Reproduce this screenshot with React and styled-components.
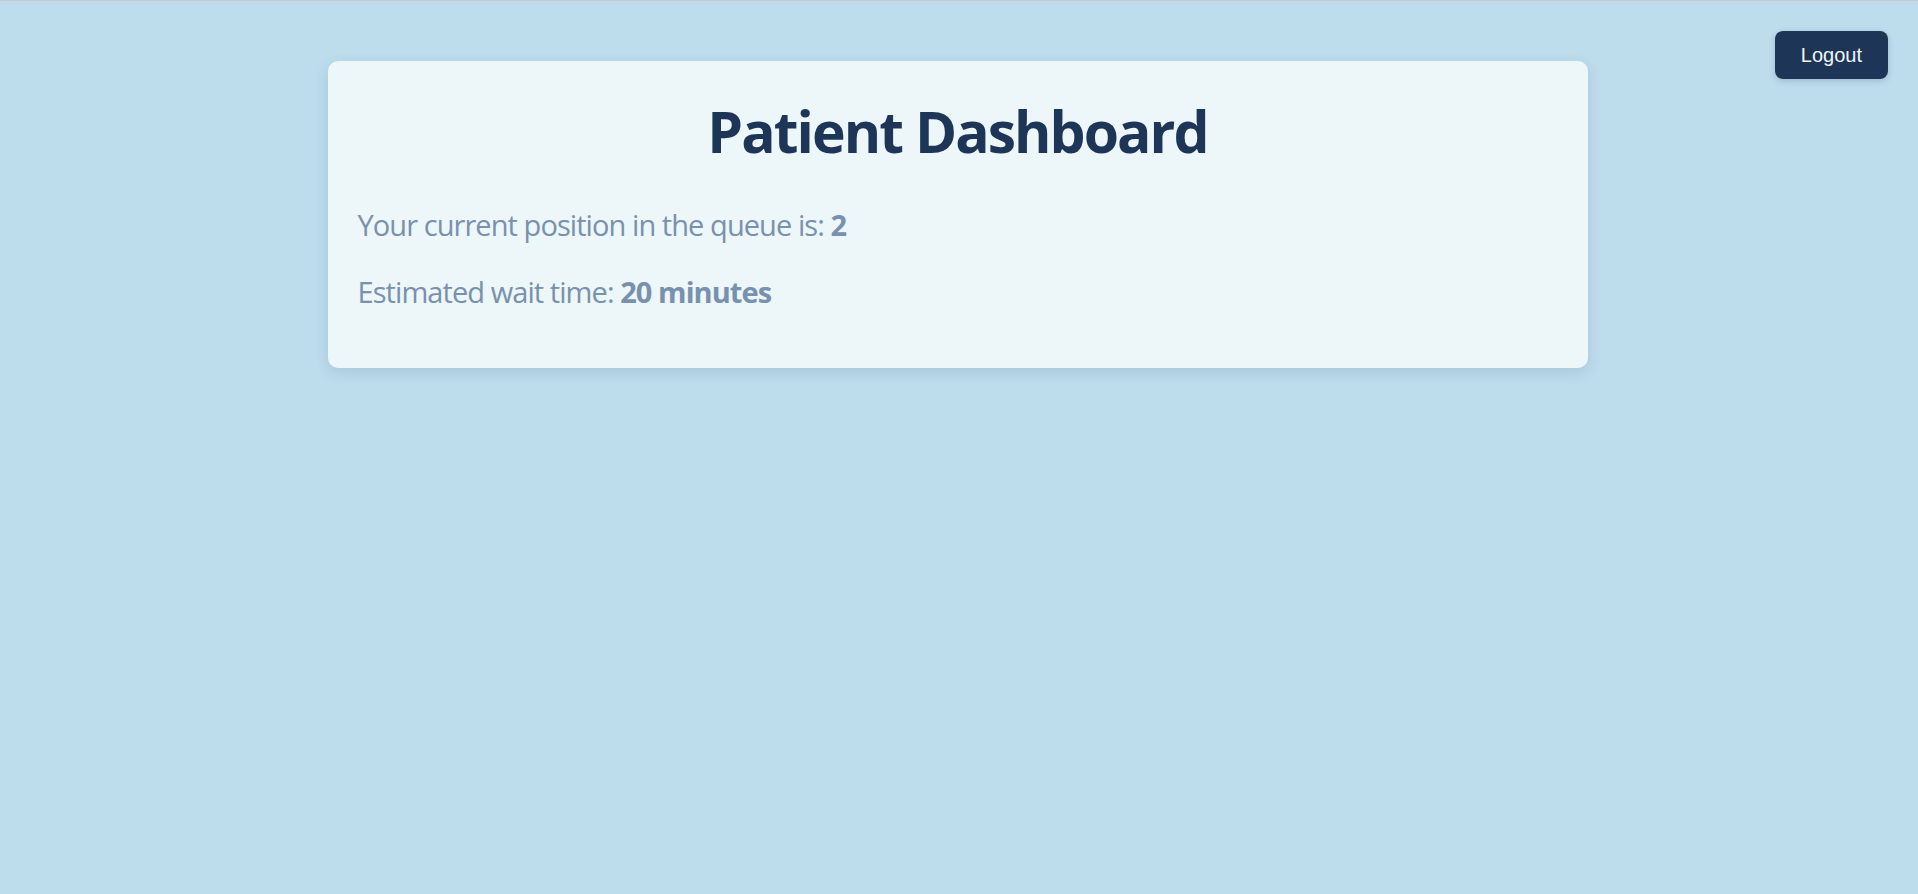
import React from "react";
import styled, { createGlobalStyle } from "styled-components";

const GlobalStyle = createGlobalStyle`
  html, body {
    margin: 0;
    padding: 0;
    background: #bddcec;
  }
  body {
    font-family: "Open Sans", "Noto Sans", sans-serif;
  }
  * { box-sizing: border-box; }
`;

const Page = styled.div`
  position: relative;
  min-height: 894px;
  border-top: 1px solid #cdc4cc;
  padding: 60px 3px 60px 0;
  background: #bddcec;
`;

const LogoutButton = styled.button`
  position: absolute;
  top: 30px;
  right: 30px;
  padding: 12px 26px;
  border: none;
  border-radius: 8px;
  background: #1d3557;
  color: #f1f6f9;
  font-family: "Liberation Sans", Arial, sans-serif;
  font-size: 20px;
  line-height: 24px;
  cursor: pointer;
  box-shadow: 0 2px 6px rgba(29, 53, 87, 0.2);
`;

const Card = styled.section`
  max-width: 1260px;
  margin: 0 auto;
  padding: 30px 30px 29px;
  background: #edf6f9;
  border-radius: 10px;
  box-shadow: 0 4px 14px rgba(40, 80, 110, 0.14);
`;

const Title = styled.h1`
  margin: 6px 0 40px;
  text-align: center;
  color: #1d3557;
  font-size: 57px;
  font-weight: 700;
  line-height: 68px;
  letter-spacing: -0.034em;
`;

const Info = styled.p`
  margin: 0 0 27px;
  color: #7891ae;
  font-size: 29px;
  line-height: 40px;
  letter-spacing: -0.032em;
`;

const Value = styled.strong`
  font-weight: 700;
`;

export default function App() {
  return (
    <>
      <GlobalStyle />
      <Page>
        <LogoutButton>Logout</LogoutButton>
        <Card>
          <Title>Patient Dashboard</Title>
          <Info>
            Your current position in the queue is: <Value>2</Value>
          </Info>
          <Info>
            Estimated wait time: <Value>20 minutes</Value>
          </Info>
        </Card>
      </Page>
    </>
  );
}
